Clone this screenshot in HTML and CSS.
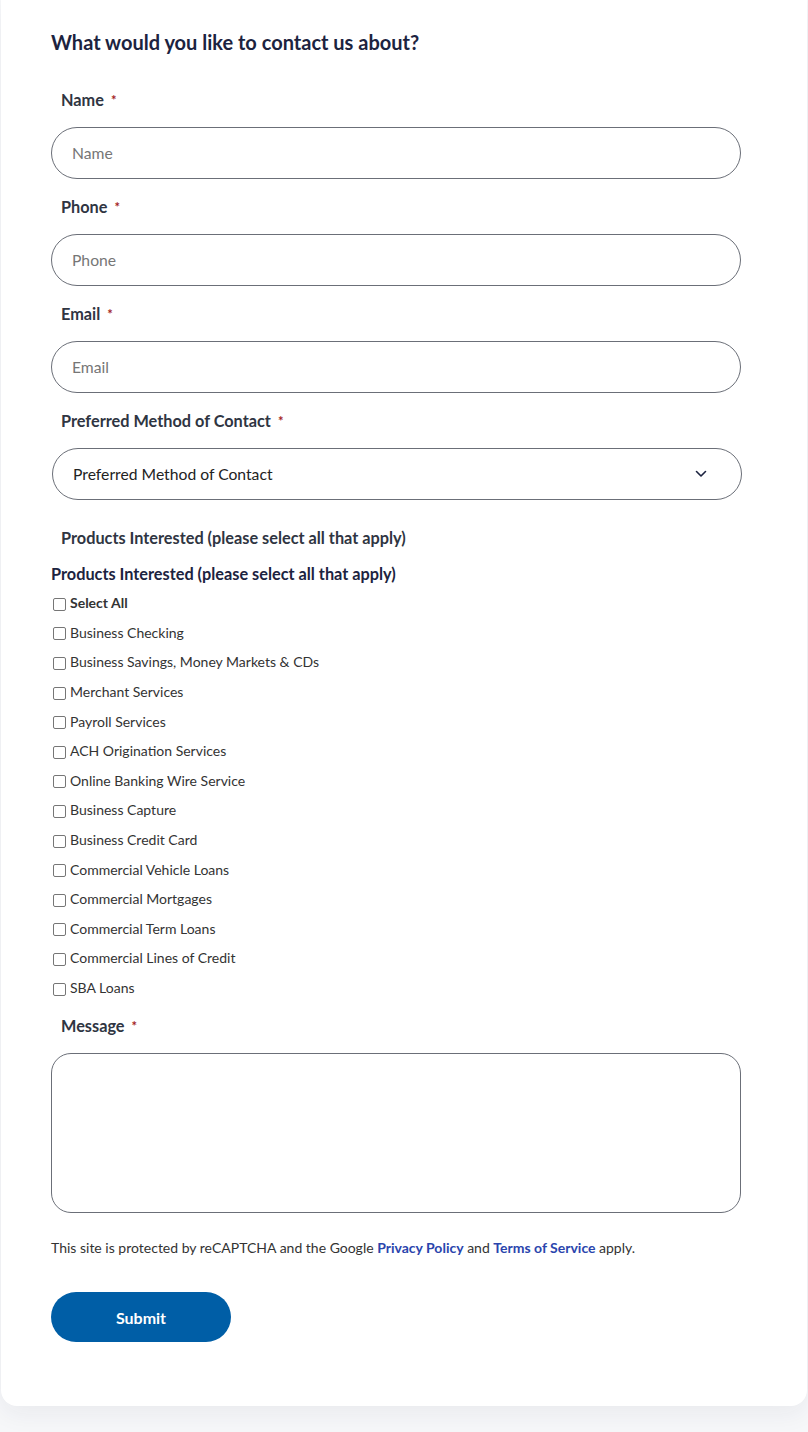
FILE: index.html
```html
<!DOCTYPE html>
<html lang="en">
<head>
<meta charset="utf-8">
<title>Contact</title>
<link rel="stylesheet" href="styles.css">
</head>
<body>
<main class="card">
  <h2 class="title">What would you like to contact us about?</h2>

  <div class="field">
    <label class="label">Name<span class="req">*</span></label>
    <div class="input"><span class="ph">Name</span></div>
  </div>
  <div class="field">
    <label class="label">Phone<span class="req">*</span></label>
    <div class="input"><span class="ph">Phone</span></div>
  </div>
  <div class="field">
    <label class="label">Email<span class="req">*</span></label>
    <div class="input"><span class="ph">Email</span></div>
  </div>
  <div class="field">
    <label class="label">Preferred Method of Contact<span class="req">*</span></label>
    <div class="select">
      <span class="sel-text">Preferred Method of Contact</span>
      <svg class="chev" width="12" height="8" viewBox="0 0 12 8"><path d="M1.5 1.5 L6 6 L10.5 1.5" fill="none" stroke="#1c2340" stroke-width="1.6" stroke-linecap="round" stroke-linejoin="round"/></svg>
    </div>
  </div>

  <div class="products">
    <div class="label plain">Products Interested (please select all that apply)</div>
    <div class="legend">Products Interested (please select all that apply)</div>
    <ul class="checks">
      <li class="check bold"><span class="box"></span>Select All</li>
      <li class="check"><span class="box"></span>Business Checking</li>
      <li class="check"><span class="box"></span>Business Savings, Money Markets &amp; CDs</li>
      <li class="check"><span class="box"></span>Merchant Services</li>
      <li class="check"><span class="box"></span>Payroll Services</li>
      <li class="check"><span class="box"></span>ACH Origination Services</li>
      <li class="check"><span class="box"></span>Online Banking Wire Service</li>
      <li class="check"><span class="box"></span>Business Capture</li>
      <li class="check"><span class="box"></span>Business Credit Card</li>
      <li class="check"><span class="box"></span>Commercial Vehicle Loans</li>
      <li class="check"><span class="box"></span>Commercial Mortgages</li>
      <li class="check"><span class="box"></span>Commercial Term Loans</li>
      <li class="check"><span class="box"></span>Commercial Lines of Credit</li>
      <li class="check"><span class="box"></span>SBA Loans</li>
    </ul>
  </div>

  <div class="field msg">
    <label class="label">Message<span class="req">*</span></label>
    <div class="textarea"></div>
  </div>

  <p class="recaptcha">This site is protected by reCAPTCHA and the Google <a href="#">Privacy Policy</a> and <a href="#">Terms of Service</a> apply.</p>

  <button class="submit" type="button">Submit</button>
</main>
</body>
</html>
```

FILE: styles.css
```css
* { box-sizing: border-box; }
html, body { margin: 0; padding: 0; }
body {
  background: #f6f7f9;
  font-family: "Lato", "Liberation Sans", sans-serif;
  color: #2f3542;
  height: 1432px;
  overflow: hidden;
}
.card {
  margin: 0 1px;
  background: #fff;
  border-radius: 0 0 16px 16px;
  box-shadow: 0 8px 24px rgba(30, 40, 70, 0.06);
  padding: 30px 66px 64px 50px;
}
.title {
  margin: 0;
  font-size: 20px;
  line-height: 24px;
  font-weight: 700;
  color: #1c2340;
}
.field { display: flex; flex-direction: column; margin-top: 18px; }
.title + .field { margin-top: 36px; }
.label {
  display: block;
  padding-left: 10px;
  font-size: 16.3px;
  line-height: 20px;
  font-weight: 700;
  color: #2f3542;
  margin-bottom: 17px;
}
.req { color: #a31d24; margin-left: 7px; font-size: 13px; vertical-align: top; }
.input {
  height: 52px;
  border: 1px solid #6b6f78;
  border-radius: 26px;
  display: flex;
  align-items: center;
  padding-left: 20px;
}
.ph { font-size: 15.7px; color: #767676; }
.select {
  height: 52px;
  margin: 0 -1px 0 1px;
  border: 1px solid #6b6f78;
  border-radius: 26px;
  display: flex;
  align-items: center;
  justify-content: space-between;
  padding: 0 34px 0 20px;
}
.sel-text { font-size: 15.7px; color: #222; }
.chev { display: block; }
.products { margin-top: 28px; }
.label.plain { margin-bottom: 16px; }
.legend {
  font-size: 16.3px;
  line-height: 20px;
  font-weight: 700;
  color: #1c2340;
  margin-bottom: 4px;
}
.checks { list-style: none; margin: 0; padding: 0; }
.check {
  height: 29.6px;
  display: flex;
  align-items: center;
  font-size: 14px;
  color: #333;
}
.check.bold { font-weight: 700; }
.box {
  width: 13px;
  height: 13px;
  border: 1px solid #767676;
  border-radius: 2px;
  margin: 3px 4px 0 2px;
  flex: none;
}
.field.msg { margin-top: 14px; }
.textarea {
  height: 160px;
  border: 1px solid #6b6f78;
  border-radius: 20px;
}
.recaptcha {
  margin: 25px 0 0;
  font-size: 14px;
  line-height: 20px;
  color: #333;
}
.recaptcha a { color: #2a45ad; font-weight: 700; text-decoration: none; }
.submit {
  display: block;
  margin-top: 34px;
  width: 180px;
  height: 50px;
  border: 0;
  border-radius: 25px;
  background: #005ea6;
  color: #fff;
  font-family: inherit;
  font-size: 16px;
  font-weight: 700;
}
```
